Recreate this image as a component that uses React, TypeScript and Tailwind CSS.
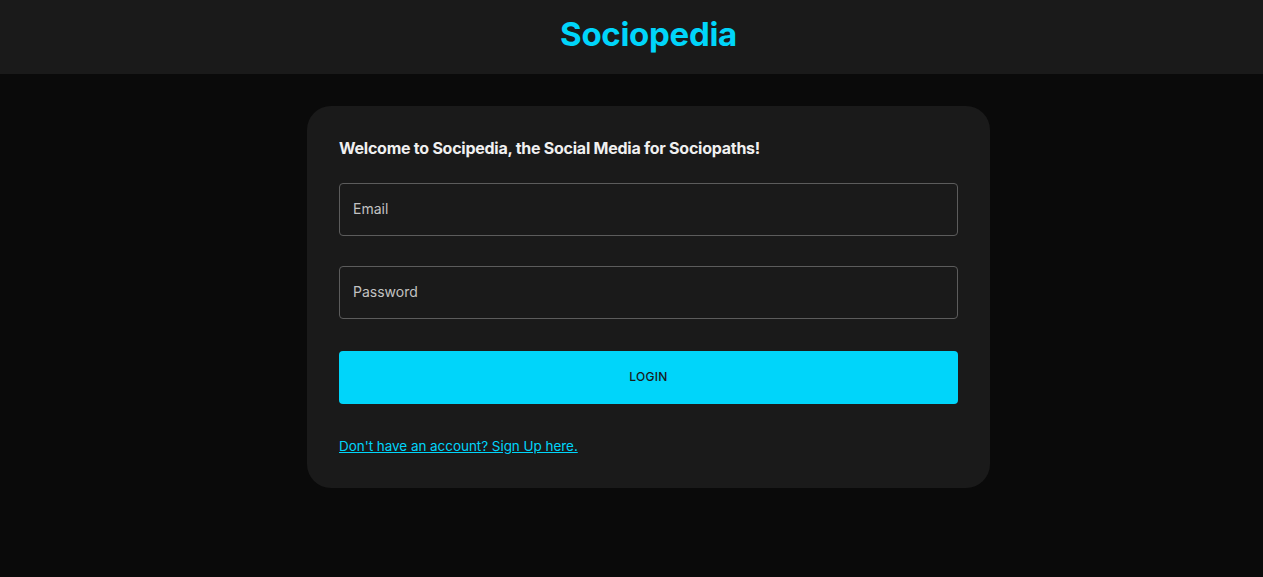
import React from "react";

export default function App() {
  const font = { fontFamily: "Inter, 'Noto Sans', sans-serif" };
  return (
    <div className="min-h-[577px] w-full bg-[#0a0a0a]" style={font}>
      <header className="flex h-[74px] w-full items-center justify-center bg-[#1a1a1a] pb-[5px] pl-[34px]">
        <h1 className="text-[33px] font-bold leading-none tracking-[-0.3px] text-[#00d5fa]">Sociopedia</h1>
      </header>
      <main className="flex w-full justify-center pl-[34px] pt-[32px]">
        <div className="w-[683px] rounded-[24px] bg-[#1a1a1a] p-[32px]">
          <h2 className="mb-[25px] text-[16px] font-bold leading-[20px] tracking-[-0.25px] text-[#f0f0f0]">
            Welcome to Socipedia, the Social Media for Sociopaths!
          </h2>
          <div className="flex flex-col gap-[30px]">
            <input
              placeholder="Email"
              className="h-[53px] w-full rounded-[4px] border border-[#5c5c5c] bg-transparent px-[13px] pb-[3px] text-[14px] text-[#e0e0e0] outline-none placeholder:text-[#c2c2c2]"
            />
            <input
              type="password"
              placeholder="Password"
              className="h-[53px] w-full rounded-[4px] border border-[#5c5c5c] bg-transparent px-[13px] pb-[2px] text-[14px] text-[#e0e0e0] outline-none placeholder:text-[#c2c2c2]"
            />
          </div>
          <button className="mt-[32px] flex h-[53px] w-full items-center justify-center rounded-[4px] bg-[#00d5fa] pb-[1px] text-[12px] font-medium tracking-[0.3px] text-[#1a1a1a]">
            LOGIN
          </button>
          <div className="mt-[32px] h-[20px] text-[13.5px] leading-[20px] tracking-[-0.05px]">
            <a href="#" className="text-[#00d5fa] underline">
              Don't have an account? Sign Up here.
            </a>
          </div>
        </div>
      </main>
    </div>
  );
}
